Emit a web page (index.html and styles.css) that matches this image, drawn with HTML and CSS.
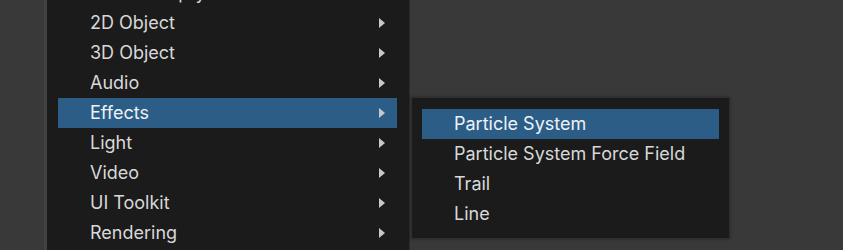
FILE: index.html
```html
<!DOCTYPE html>
<html>
<head>
<meta charset="utf-8">
<link rel="stylesheet" href="styles.css">
</head>
<body>
<div class="stage">
  <ul class="menu main-menu">
    <li class="item"><span class="label">Create Empty</span></li>
    <li class="item has-sub"><span class="label">2D Object</span><span class="arrow"></span></li>
    <li class="item has-sub"><span class="label">3D Object</span><span class="arrow"></span></li>
    <li class="item has-sub"><span class="label">Audio</span><span class="arrow"></span></li>
    <li class="item has-sub active"><span class="label">Effects</span><span class="arrow"></span></li>
    <li class="item has-sub"><span class="label">Light</span><span class="arrow"></span></li>
    <li class="item has-sub"><span class="label">Video</span><span class="arrow"></span></li>
    <li class="item has-sub"><span class="label">UI Toolkit</span><span class="arrow"></span></li>
    <li class="item has-sub"><span class="label">Rendering</span><span class="arrow"></span></li>
  </ul>
  <ul class="menu sub-menu">
    <li class="item active"><span class="label">Particle System</span></li>
    <li class="item"><span class="label">Particle System Force Field</span></li>
    <li class="item"><span class="label">Trail</span></li>
    <li class="item"><span class="label">Line</span></li>
  </ul>
</div>
</body>
</html>
```
FILE: styles.css
```css
html, body {
  margin: 0;
  padding: 0;
  background: #393939;
  width: 843px;
  height: 250px;
  overflow: hidden;
}
.stage {
  position: relative;
  display: flow-root;
  width: 843px;
  height: 250px;
  font-family: Inter, "Noto Sans", sans-serif;
  font-size: 18px;
  color: #d8d8d8;
}
.menu {
  list-style: none;
  margin: 0;
  background: #1b1b1b;
  box-sizing: border-box;
}
.main-menu {
  margin-left: 44px;
  margin-top: -33px;
  width: 366px;
  padding: 10px 12px 10px 11px;
  border: 1px solid #2b2b2b;
  border-left: 3px solid #424242;
}
.item {
  display: flex;
  align-items: center;
  justify-content: space-between;
  height: 30px;
  padding: 0 12px 0 32px;
  box-sizing: border-box;
  white-space: nowrap;
}
.item.active {
  background: #2c5d87;
  color: #eef2f6;
}
.label {
  line-height: 30px;
}
.arrow {
  width: 0;
  height: 0;
  border-top: 5px solid transparent;
  border-bottom: 5px solid transparent;
  border-left: 6px solid #c8c8c8;
}
.sub-menu {
  position: absolute;
  left: 411px;
  top: 97px;
  width: 319px;
  padding: 11px 10px 9px 10px;
  border: 1px solid #2e2e2e;
  box-shadow: 0 0 3px rgba(0,0,0,0.35);
}
```
